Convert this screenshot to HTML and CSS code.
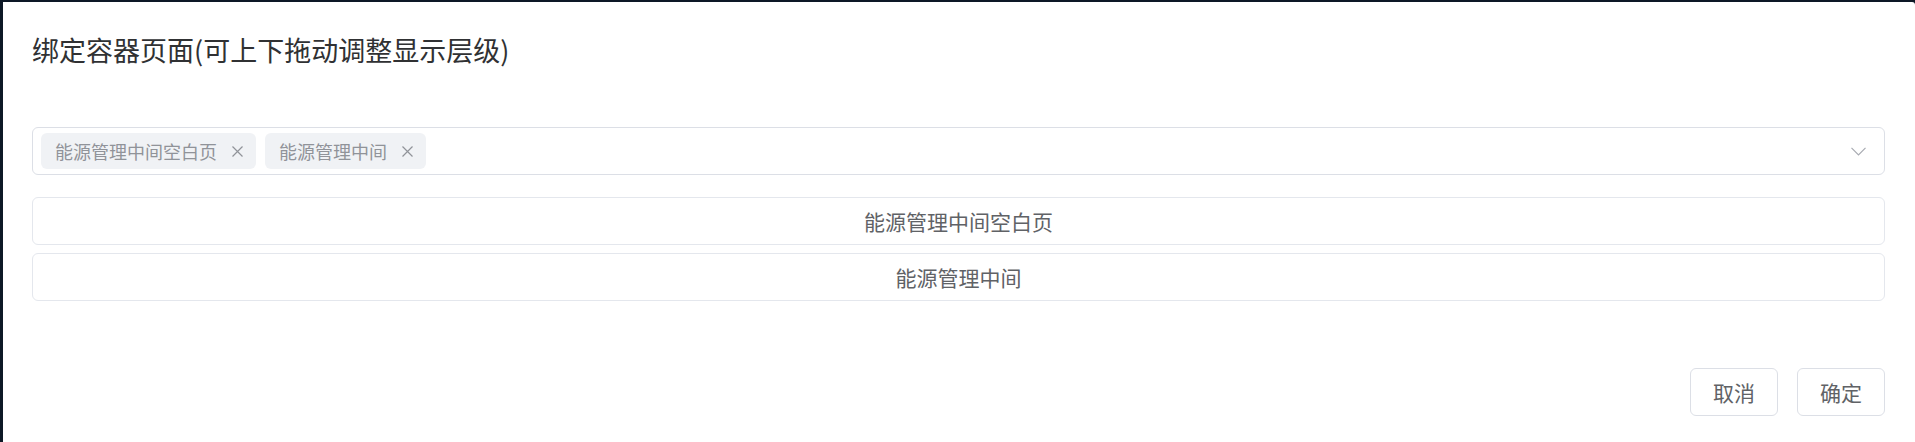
FILE: index.html
```html
<!DOCTYPE html>
<html lang="zh-CN">
<head>
<meta charset="utf-8">
<title>绑定容器页面</title>
<link rel="stylesheet" href="styles.css">
</head>
<body>
<div class="dialog">
  <div class="dialog-header">
    <span class="dialog-title">绑定容器页面(可上下拖动调整显示层级)</span>
  </div>
  <div class="dialog-body">
    <div class="select">
      <div class="tags">
        <span class="tag"><span class="tag-text">能源管理中间空白页</span><svg class="tag-close" width="11" height="11" viewBox="0 0 11 11"><path d="M0.5 0.5 L10.5 10.5 M10.5 0.5 L0.5 10.5" stroke="#909399" stroke-width="1.2" fill="none"/></svg></span>
        <span class="tag"><span class="tag-text">能源管理中间</span><svg class="tag-close" width="11" height="11" viewBox="0 0 11 11"><path d="M0.5 0.5 L10.5 10.5 M10.5 0.5 L0.5 10.5" stroke="#909399" stroke-width="1.2" fill="none"/></svg></span>
      </div>
      <svg class="chevron" width="15" height="9" viewBox="0 0 15 9"><path d="M0.5 0.8 L7.5 7.8 L14.5 0.8" stroke="#a8abb2" stroke-width="1.2" fill="none"/></svg>
    </div>
    <div class="list">
      <div class="list-item">能源管理中间空白页</div>
      <div class="list-item">能源管理中间</div>
    </div>
  </div>
  <div class="dialog-footer">
    <button class="btn">取消</button>
    <button class="btn">确定</button>
  </div>
</div>
</body>
</html>
```

FILE: styles.css
```css
* {
  box-sizing: border-box;
}

html, body {
  margin: 0;
  padding: 0;
  height: 100%;
}

body {
  background: #0d1826;
  font-family: "Noto Sans CJK SC", "Noto Sans", sans-serif;
  overflow: hidden;
}

.dialog {
  margin: 2px 0 0 3px;
  height: 440px;
  background: #ffffff;
  border-top-right-radius: 3px;
  padding: 0 30px 0 29px;
  display: flex;
  flex-direction: column;
}

.dialog-header {
  padding-top: 30px;
  height: 66px;
}

.dialog-title {
  display: block;
  font-size: 27px;
  line-height: 36px;
  color: #303133;
}

.dialog-body {
  padding-top: 59px;
}

.select {
  height: 48px;
  border: 1px solid #dcdfe6;
  border-radius: 6px;
  display: flex;
  align-items: center;
  padding: 0 18px 0 8px;
}

.tags {
  flex: 1;
  display: flex;
  align-items: center;
  gap: 9px;
}

.tag {
  height: 36px;
  display: inline-flex;
  align-items: center;
  gap: 15px;
  padding: 0 13px 0 14px;
  background: #f0f2f5;
  border-radius: 6px;
  font-size: 18px;
  color: #909399;
}

.tag-close {
  display: block;
}

.chevron {
  display: block;
}

.list {
  margin-top: 22px;
  display: flex;
  flex-direction: column;
  gap: 8px;
}

.list-item {
  height: 48px;
  border: 1px solid #e4e7ed;
  border-radius: 6px;
  display: flex;
  align-items: center;
  justify-content: center;
  font-size: 21px;
  color: #606266;
}

.dialog-footer {
  margin-top: 67px;
  display: flex;
  justify-content: flex-end;
  gap: 19px;
}

.btn {
  height: 48px;
  padding: 0 22px;
  border: 1px solid #dcdfe6;
  border-radius: 6px;
  background: #ffffff;
  font-family: "Noto Sans CJK SC", "Noto Sans", sans-serif;
  font-size: 21px;
  color: #606266;
  cursor: pointer;
}
```
